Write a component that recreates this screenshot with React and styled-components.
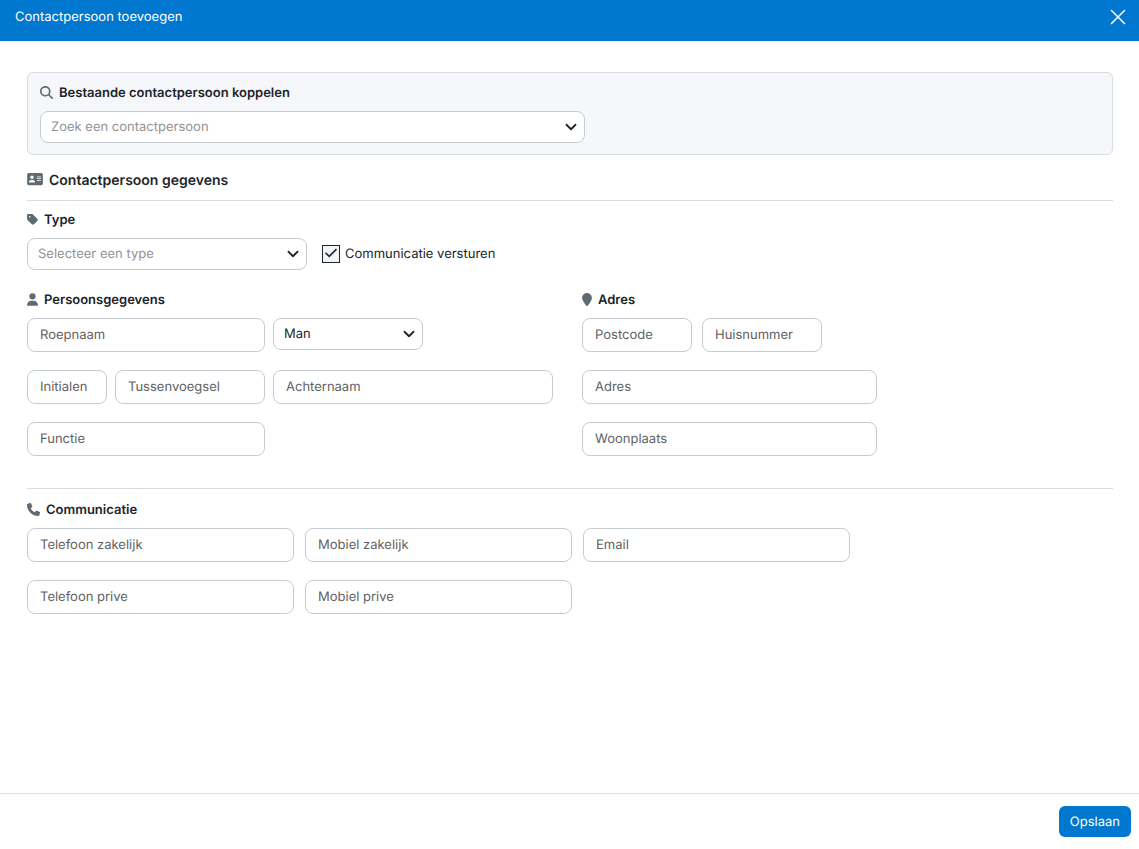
import React, { useCallback, useState } from 'react'
import styled, { createGlobalStyle } from 'styled-components'
import {
    FaAddressCard,
    FaLocationPin,
    FaMagnifyingGlass,
    FaPhone,
    FaTag,
    FaUser,
} from 'react-icons/fa6'

const GlobalStyle = createGlobalStyle`
    *, *::before, *::after {
        box-sizing: border-box;
    }

    body {
        margin: 0;
        background: #fff;
        color: #212529;
        font-family: Inter, 'Liberation Sans', sans-serif;
        font-size: 13px;
        line-height: 16px;
        text-rendering: geometricPrecision;
    }

    button, input, select {
        font: inherit;
        text-rendering: inherit;
    }
`

const Page = styled.form`
    display: flex;
    flex-direction: column;
    min-height: 100vh;
`

const Header = styled.header`
    display: flex;
    justify-content: space-between;
    align-items: flex-start;
    padding: 9px 13px 16px 15px;
    background: #0078d0;
    color: #fff;
`

const Title = styled.h1`
    margin: 0;
    font-size: 13px;
    font-weight: 400;
`

const CloseButton = styled.button`
    display: flex;
    padding: 0;
    border: 0;
    background: none;
    color: inherit;
    cursor: pointer;
`

const Body = styled.main`
    flex: 1;
    padding: 31px 26px 31px 27px;
`

const Card = styled.section`
    padding: 12px 12px 11px;
    border: 1px solid #d8dde2;
    border-radius: 6px;
    background: #f6f7fa;
`

const Heading = styled.h2`
    display: flex;
    align-items: center;
    gap: 6px;
    margin: 16px 0 0;
    padding-bottom: 9px;
    border-bottom: 1px solid #d8dde2;
    font-size: 14px;
    font-weight: 600;
    line-height: 20px;

    svg {
        width: 16px;
        height: 14px;
        margin-bottom: 4px;
        color: #5f6b73;
    }
`

const SubHeading = styled.h3`
    display: flex;
    align-items: center;
    gap: 6px;
    margin: 0 0 10px;
    font-size: 13px;
    font-weight: 600;

    svg {
        flex: none;
        width: ${props => props.$icon || 13}px;
        height: 13px;
        margin-bottom: 1px;
        color: #5f6b73;
    }
`

const Group = styled.section`
    padding-top: ${props => props.$top}px;
`

const Columns = styled.div`
    display: flex;
    gap: 29px;
    padding: 22px 0 32px;
    border-bottom: 1px solid #d8dde2;
`

const Column = styled.section`
    flex: 0 1 ${props => props.$width}px;
    min-width: 0;
`

const Row = styled.div`
    display: flex;
    align-items: flex-start;
    gap: ${props => props.$gap || 8}px;

    & + & {
        margin-top: 18px;
    }
`

const InputText = styled.input`
    flex: 0 1 ${props => props.$width}px;
    min-width: 0;
    height: 34px;
    padding: 0 12px;
    border: 1px solid #c5ccd3;
    border-radius: 8px;
    background: #fff;
    color: #212529;

    &::placeholder {
        color: #5f6265;
        opacity: 1;
    }
`

const SelectWrapper = styled.div`
    display: grid;
    align-items: center;
    flex: 0 1 ${props => props.$width}px;
    max-width: ${props => props.$width}px;
    min-width: 0;

    select, svg {
        grid-area: 1 / 1;
    }

    svg {
        justify-self: end;
        margin-right: 8px;
        pointer-events: none;
    }
`

const SelectBox = styled.select`
    appearance: none;
    width: 100%;
    height: 32px;
    padding: 0 28px 0 10px;
    border: 1px solid #c5ccd3;
    border-radius: 8px;
    background: #fff;
    color: ${props => (props.$empty ? '#929292' : '#212529')};
`

const CheckLabel = styled.label`
    display: flex;
    align-items: center;
    gap: 5px;
    height: 32px;
    margin-left: 7px;
`

const CheckMark = styled.span`
    display: grid;
    place-items: center;

    input, svg {
        grid-area: 1 / 1;
    }

    svg {
        pointer-events: none;
    }

    input:not(:checked) + svg {
        visibility: hidden;
    }
`

const CheckInput = styled.input`
    appearance: none;
    width: 18px;
    height: 18px;
    margin: 0;
    border: 1px solid #212529;
    background: #f1f5fa;
`

const Footer = styled.footer`
    display: flex;
    justify-content: flex-end;
    padding: 12px 8px;
    border-top: 1px solid #dcdee0;
`

const SaveButton = styled.button`
    min-width: 72px;
    height: 31px;
    padding: 0 11px;
    border: 0;
    border-radius: 6px;
    background: #0078d0;
    color: #fff;
    cursor: pointer;
`

function Select({ width, label, placeholder, options }) {
    const [value, setValue] = useState(placeholder ? '' : options[0])

    const handleChange = useCallback((event) => {
        setValue(event.target.value)
    }, [])

    return (
        <SelectWrapper $width={width}>
            <SelectBox aria-label={label} value={value} onChange={handleChange} $empty={!value}>
                {placeholder && <option value="" disabled>{placeholder}</option>}
                {options.map(option => <option key={option}>{option}</option>)}
            </SelectBox>
            <svg width="12" height="12" viewBox="0 0 16 16" fill="none" stroke="#212529" strokeWidth="2.4" strokeLinecap="round" strokeLinejoin="round">
                <path d="m2 5 6 6 6-6" />
            </svg>
        </SelectWrapper>
    )
}

function Field({ width, label, type = 'text' }) {
    return <InputText type={type} aria-label={label} placeholder={label} $width={width} />
}

function App() {
    const [send, setSend] = useState(true)

    const handleSubmit = useCallback((event) => {
        event.preventDefault()
    }, [])

    return (
        <Page onSubmit={handleSubmit}>
            <GlobalStyle />
            <Header>
                <Title>Contactpersoon toevoegen</Title>
                <CloseButton type="button" aria-label="Sluiten">
                    <svg width="16" height="16" viewBox="0 0 16 16" fill="none" stroke="currentColor" strokeWidth="1.5" strokeLinecap="round">
                        <path d="M1.5 1.5l13 13M14.5 1.5l-13 13" />
                    </svg>
                </CloseButton>
            </Header>

            <Body>
                <Card>
                    <SubHeading><FaMagnifyingGlass />Bestaande contactpersoon koppelen</SubHeading>
                    <Select width={545} label="Contactpersoon" placeholder="Zoek een contactpersoon" options={[]} />
                </Card>

                <Heading><FaAddressCard />Contactpersoon gegevens</Heading>

                <Group $top={11}>
                    <SubHeading $icon={11}><FaTag />Type</SubHeading>
                    <Row>
                        <Select width={280} label="Type" placeholder="Selecteer een type" options={[]} />
                        <CheckLabel>
                            <CheckMark>
                                <CheckInput type="checkbox" checked={send} onChange={() => setSend(!send)} />
                                <svg width="14" height="14" viewBox="0 0 14 14" fill="none" stroke="#212529" strokeWidth="1.6">
                                    <path d="M1.5 5.7l3.7 3.7 7.3-7.3" />
                                </svg>
                            </CheckMark>
                            Communicatie versturen
                        </CheckLabel>
                    </Row>
                </Group>

                <Columns>
                    <Column $width={526}>
                        <SubHeading $icon={11}><FaUser />Persoonsgegevens</SubHeading>
                        <Row>
                            <Field width={238} label="Roepnaam" />
                            <Select width={150} label="Geslacht" options={['Man', 'Vrouw']} />
                        </Row>
                        <Row>
                            <Field width={80} label="Initialen" />
                            <Field width={150} label="Tussenvoegsel" />
                            <Field width={280} label="Achternaam" />
                        </Row>
                        <Row>
                            <Field width={238} label="Functie" />
                        </Row>
                    </Column>
                    <Column $width={295}>
                        <SubHeading $icon={10}><FaLocationPin />Adres</SubHeading>
                        <Row $gap={10}>
                            <Field width={110} label="Postcode" />
                            <Field width={120} label="Huisnummer" />
                        </Row>
                        <Row>
                            <Field width={295} label="Adres" />
                        </Row>
                        <Row>
                            <Field width={295} label="Woonplaats" />
                        </Row>
                    </Column>
                </Columns>

                <Group $top={13}>
                    <SubHeading><FaPhone />Communicatie</SubHeading>
                    <Row $gap={11}>
                        <Field width={267} label="Telefoon zakelijk" type="tel" />
                        <Field width={267} label="Mobiel zakelijk" type="tel" />
                        <Field width={267} label="Email" type="email" />
                    </Row>
                    <Row $gap={11}>
                        <Field width={267} label="Telefoon prive" type="tel" />
                        <Field width={267} label="Mobiel prive" type="tel" />
                    </Row>
                </Group>
            </Body>

            <Footer>
                <SaveButton type="submit">Opslaan</SaveButton>
            </Footer>
        </Page>
    )
}

export default App
